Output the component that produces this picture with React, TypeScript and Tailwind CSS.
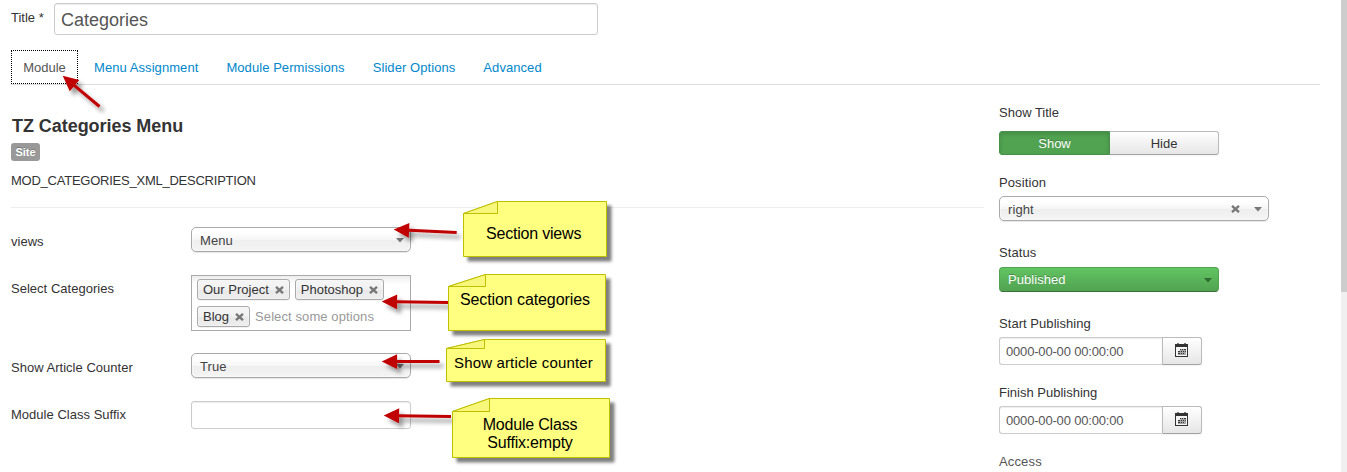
import type { ReactNode } from "react";

const tabs = ["Menu Assignment", "Module Permissions", "Slider Options", "Advanced"];

function Cross({ className = "" }: { className?: string }) {
  return (
    <svg className={className} width="9" height="8" viewBox="0 0 9 8">
      <path d="M1 0.8 8 7.2M8 0.8 1 7.2" stroke="#777" strokeWidth="2.3" />
    </svg>
  );
}

function Caret({ color = "#777" }: { color?: string }) {
  return (
    <svg className="mt-[2px] shrink-0" width="8" height="5" viewBox="0 0 8 5">
      <path d="M0 0H8L4 4.6Z" fill={color} />
    </svg>
  );
}

function Select({ value, clearable = false }: { value: string; clearable?: boolean }) {
  return (
    <div className="flex h-[25px] w-full items-center rounded-[5px] border border-[#aaa] bg-[linear-gradient(#fff_20%,#f6f6f6_50%,#eee_52%,#f4f4f4_100%)] pr-[6px] pl-2 text-[#444] shadow-[inset_0_0_3px_#fff,0_1px_1px_rgba(0,0,0,0.1)]">
      <span className="grow pt-[2px] tracking-[0.1px]">{value}</span>
      {clearable && <Cross className="mr-[14px]" />}
      <Caret />
    </div>
  );
}

function Tag({ children }: { children: ReactNode }) {
  return (
    <span className="flex h-[21px] items-center gap-[6px] rounded-[3px] border border-[#aaa] bg-[linear-gradient(#f4f4f4_20%,#f0f0f0_50%,#e8e8e8_52%,#eee_100%)] pr-[5px] pl-[5px] text-[#333] shadow-[inset_0_0_2px_#fff,0_1px_0_rgba(0,0,0,0.05)]">
      {children}
      <Cross className="mt-px" />
    </span>
  );
}

function Field({ label, className, labelClassName, children }: { label: string; className: string; labelClassName: string; children: ReactNode }) {
  return (
    <div className={`flex items-start ${className}`}>
      <div className={`w-[180px] tracking-[0.02px] ${labelClassName}`}>{label}</div>
      <div className="w-[220px]">{children}</div>
    </div>
  );
}

function CalendarIcon() {
  return (
    <svg width="13" height="14" viewBox="0 0 13 14" shapeRendering="crispEdges">
      <path d="M0 1H13V14H0Z" fill="#333" />
      <path d="M2 0H4V1H2ZM9 0H11V1H9Z" fill="#777" />
      <path d="M1 4H12V13H1Z" fill="#f4f4f4" />
      <path d="M5 6h6v6H3V8h2z" fill="#333" fillOpacity=".4" />
      <path d="M5 6h1v1H5zM7 6h1v1H7zM9 6h2v1H9zM3 8h2v1H3zM6 8h1v1H6zM8 8h1v1H8zM10 8h1v1h-1zM3 10h2v1H3zM6 10h1v1H6zM8 10h1v1H8z" fill="#333" />
    </svg>
  );
}

function DateInput() {
  return (
    <div className="flex h-[28px] w-[203px]">
      <div className="flex w-[163px] items-center rounded-l-[3px] border border-r-0 border-[#ccc] bg-white pt-px pl-[6px] tracking-[-0.18px] text-[#555] shadow-[inset_0_1px_1px_rgba(0,0,0,0.075)]">
        0000-00-00 00:00:00
      </div>
      <div className="flex w-[40px] items-center justify-center rounded-r-[3px] border border-[#bbb] border-b-[#a2a2a2] bg-linear-to-b from-white to-[#e6e6e6] pr-px pb-[2px] shadow-[0_1px_2px_rgba(0,0,0,0.05)]">
        <CalendarIcon />
      </div>
    </div>
  );
}

type Point = [number, number];

function Arrow({ tip, tail }: { tip: Point; tail: Point }) {
  const dx = tail[0] - tip[0];
  const dy = tail[1] - tip[1];
  const length = Math.hypot(dx, dy);
  const angle = (Math.atan2(dy, dx) * 180) / Math.PI;
  return (
    <g filter="url(#arrow-shadow)">
      <g transform={`translate(${tip[0]} ${tip[1]}) rotate(${angle})`} fill="#c00000">
        <path d={`M0 0 15.4 -7.4V-1.5H${length}V1.5H15.4V7.4Z`} />
      </g>
    </g>
  );
}

function NoteShape({ x, y, r, b, fx, fy }: { x: number; y: number; r: number; b: number; fx: number; fy: number }) {
  return (
    <g stroke="#bfbf00" strokeWidth="1" strokeLinejoin="round">
      <path d={`M${x} ${fy} ${fx} ${y}H${r}V${b}H${x}Z`} fill="#ffff80" filter="url(#note-shadow)" />
      <path d={`M${x} ${fy} ${fx} ${y}V${fy}Z`} fill="#f7f77c" />
    </g>
  );
}

function Annotations() {
  return (
    <div className="pointer-events-none absolute inset-0 text-black">
      <svg className="absolute inset-0" width="1347" height="472" viewBox="0 0 1347 472">
        <defs>
          <filter id="arrow-shadow" filterUnits="userSpaceOnUse" x="0" y="0" width="1347" height="472">
            <feDropShadow dx="4" dy="4.5" stdDeviation="2" floodColor="#000" floodOpacity=".4" />
          </filter>
          <filter id="note-shadow" filterUnits="userSpaceOnUse" x="0" y="0" width="1347" height="472">
            <feDropShadow dx="4.5" dy="4.5" stdDeviation="1.7" floodColor="#000" floodOpacity=".5" />
          </filter>
        </defs>
        <Arrow tip={[62.7, 75.7]} tail={[99.5, 106.5]} />
        <Arrow tip={[393.7, 229.6]} tail={[456.7, 232.5]} />
        <Arrow tip={[381.7, 301.6]} tail={[449, 302.6]} />
        <Arrow tip={[381.7, 361.6]} tail={[439.5, 361.6]} />
        <Arrow tip={[383.7, 415.5]} tail={[451, 416.6]} />
        <NoteShape x={463.5} y={201.5} r={606.5} b={256.5} fx={497.5} fy={213.5} />
        <NoteShape x={448.5} y={274.5} r={605.5} b={330.5} fx={485.5} fy={286.5} />
        <NoteShape x={446.5} y={339.5} r={605.5} b={381.5} fx={484.5} fy={348.5} />
        <NoteShape x={452.5} y={398.5} r={609.5} b={457.5} fx={489.5} fy={411.5} />
      </svg>
      <div className="absolute top-[225px] left-[486px] text-[16px] leading-[18px] tracking-[-0.2px] whitespace-nowrap">Section views</div>
      <div className="absolute top-[291px] left-[460px] text-[16px] leading-[18px] tracking-[-0.1px] whitespace-nowrap">Section categories</div>
      <div className="absolute top-[354px] left-[454px] text-[15px] leading-[18px] tracking-[0.15px] whitespace-nowrap">Show article counter</div>
      <div className="absolute top-[416px] left-[472px] w-[116px] text-center text-[16px] leading-[18px] tracking-[-0.2px]">
        Module Class
        <br />
        Suffix:empty
      </div>
    </div>
  );
}

export default function App() {
  return (
    <div className="relative flex h-[472px] w-[1347px] overflow-hidden bg-white font-['Liberation_Sans',Arial,sans-serif] text-[13px] leading-[18px] text-[#333]">
      <main className="w-[1309px] shrink-0 ml-[11px] pt-[3px]">
        <div className="flex">
          <div className="w-[43px] pt-[6px]">Title *</div>
          <div className="flex h-[32px] w-[544px] items-center rounded-[3px] border border-[#ccc] pt-px pl-[6px] text-[18px] text-[#555] shadow-[inset_0_1px_1px_rgba(0,0,0,0.075)]">
            Categories
          </div>
        </div>

        <nav className="mt-[15px] flex h-[35px] border-b border-[#ddd] text-[#08c]">
          <a className="flex h-[34px] w-[67px] items-center justify-center border border-dotted border-black pt-[2px] text-[#555]">Module</a>
          <div className="ml-[16px] flex h-[34px] items-center gap-[28px] pt-[2px] tracking-[0.07px]">
            {tabs.map((tab) => (
              <a key={tab}>{tab}</a>
            ))}
          </div>
        </nav>

        <div className="flex justify-between">
          <section className="w-[973px] pt-[29px]">
            <h3 className="pl-px text-[18px] leading-[24px] font-bold tracking-[-0.05px]">TZ Categories Menu</h3>
            <span className="mt-[5px] flex h-[18px] w-[29px] items-center justify-center rounded-[3px] bg-[#999] text-[11px] font-bold text-white [text-shadow:0_-1px_0_rgba(0,0,0,0.25)]">
              Site
            </span>
            <p className="mt-[11px] tracking-[-0.24px]">MOD_CATEGORIES_XML_DESCRIPTION</p>
            <hr className="mt-[17px] border-[#eee]" />
            <Field label="views" className="mt-[19px] h-[48px]" labelClassName="pt-[6px]">
              <Select value="Menu" />
            </Field>
            <Field label="Select Categories" className="h-[78px]" labelClassName="pt-[5px]">
              <div className="flex h-[56px] flex-wrap content-start gap-x-[5px] gap-y-[6px] border border-[#aaa] bg-[linear-gradient(#eee_1%,#fff_15%)] pt-[3px] pl-[5px]">
                <Tag>Our Project</Tag>
                <Tag>Photoshop</Tag>
                <Tag>Blog</Tag>
                <span className="pt-[2px] tracking-[0.1px] text-[#999]">Select some options</span>
              </div>
            </Field>
            <Field label="Show Article Counter" className="h-[48px]" labelClassName="pt-[6px]">
              <Select value="True" />
            </Field>
            <Field label="Module Class Suffix" className="" labelClassName="pt-[5px]">
              <div className="h-[28px] rounded-[3px] border border-[#ccc] shadow-[inset_0_1px_1px_rgba(0,0,0,0.075)]" />
            </Field>
          </section>

          <aside className="w-[321px] pt-[19px]">
            <div>Show Title</div>
            <div className="mt-[9px] flex h-[24px] w-[220px] text-center leading-[23px]">
              <div className="w-[111px] rounded-l-[3px] border border-[#46914a] bg-[#51a351] text-white shadow-[inset_0_2px_4px_rgba(0,0,0,0.15)] [text-shadow:0_-1px_0_rgba(0,0,0,0.25)]">Show</div>
              <div className="w-[109px] rounded-r-[3px] border border-l-0 border-[#bbb] border-b-[#a2a2a2] bg-linear-to-b from-white to-[#e6e6e6] shadow-[0_1px_2px_rgba(0,0,0,0.05)]">Hide</div>
            </div>
            <div className="mt-[19px] tracking-[0.1px]">Position</div>
            <div className="mt-[4px] w-[270px]">
              <Select value="right" clearable />
            </div>
            <div className="mt-[23px] tracking-[0.1px]">Status</div>
            <div className="mt-[5px] flex h-[25px] w-[220px] items-center justify-between rounded-[4px] border border-[#51a351] border-b-[#387038] bg-linear-to-b from-[#62c462] to-[#51a351] pr-[6px] pl-2 text-white [text-shadow:0_-1px_0_rgba(0,0,0,0.25)]">
              <span className="pt-px tracking-[0.05px]">Published</span>
              <Caret color="#2f6b2f" />
            </div>
            <div className="mt-[23px] tracking-[0.05px]">Start Publishing</div>
            <div className="mt-[4px]">
              <DateInput />
            </div>
            <div className="mt-[19px]">Finish Publishing</div>
            <div className="mt-[4px]">
              <DateInput />
            </div>
            <div className="mt-[19px] tracking-[0.15px] text-[#555]">Access</div>
          </aside>
        </div>
      </main>
      <div className="ml-auto h-full w-[6px] bg-[#f0f0f0]">
        <div className="h-[292px] bg-[#cdcdcd]" />
      </div>
      <Annotations />
    </div>
  );
}
